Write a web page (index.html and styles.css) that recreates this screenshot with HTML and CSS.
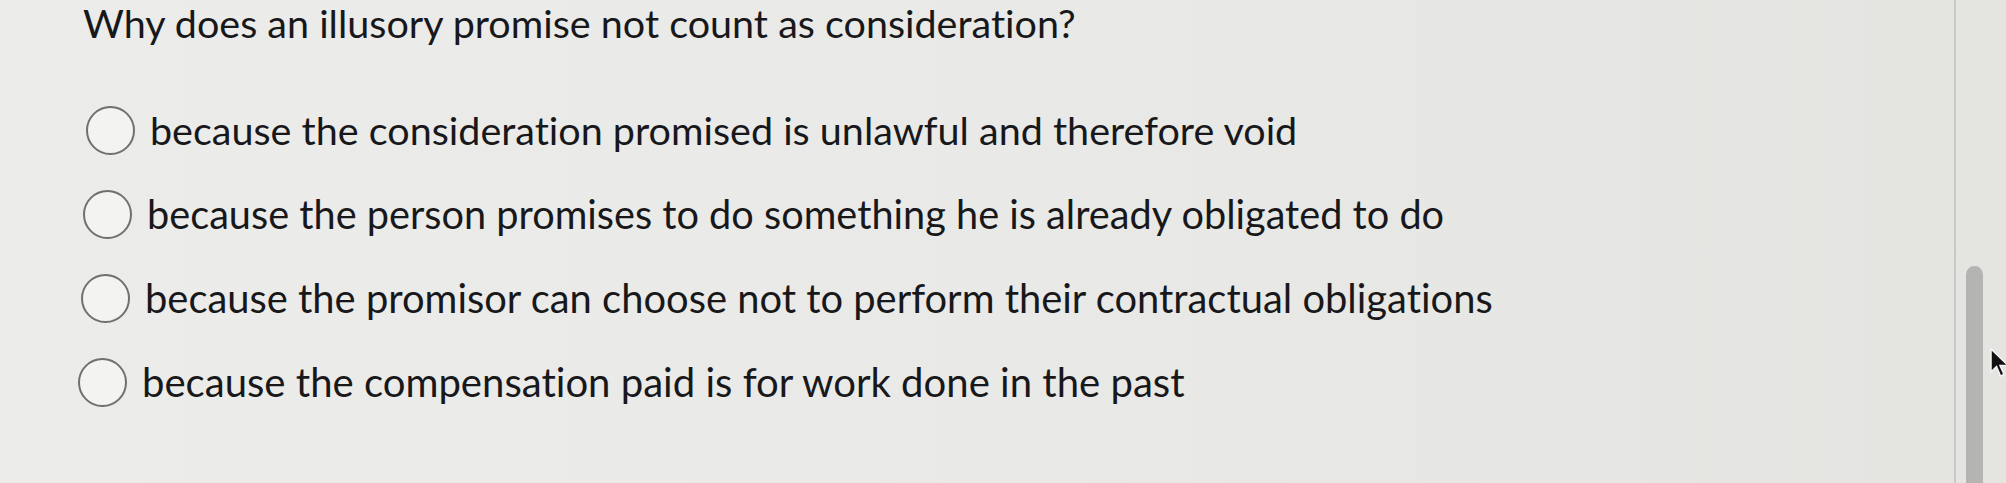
FILE: index.html
```html
<!DOCTYPE html>
<html lang="en">
<head>
<meta charset="utf-8">
<title>Quiz question</title>
<link rel="stylesheet" href="styles.css">
</head>
<body>
<div class="page">
  <main class="quiz">
    <h1 class="question">Why does an illusory promise not count as consideration?</h1>
    <ul class="answers">
      <li class="answer a1"><span class="radio"></span><span class="label">because the consideration promised is unlawful and therefore void</span></li>
      <li class="answer a2"><span class="radio"></span><span class="label">because the person promises to do something he is already obligated to do</span></li>
      <li class="answer a3"><span class="radio"></span><span class="label">because the promisor can choose not to perform their contractual obligations</span></li>
      <li class="answer a4"><span class="radio"></span><span class="label">because the compensation paid is for work done in the past</span></li>
    </ul>
  </main>
  <div class="scrollbar">
    <div class="track-line"></div>
    <div class="thumb"></div>
  </div>
  <svg class="cursor" width="22" height="32" viewBox="0 0 22 32"><path d="M1 1 L1 24 L6.5 18.5 L10.5 28 L14 26.5 L10 17.5 L18 17.5 Z" fill="#111" stroke="#f4f4f4" stroke-width="1.5"/></svg>
</div>
</body>
</html>
```
FILE: styles.css
```css
html, body {
  margin: 0;
  padding: 0;
}
body {
  width: 2006px;
  height: 483px;
  overflow: hidden;
  background: linear-gradient(90deg, #ececea 0%, #e9e9e7 50%, #e4e4e1 100%);
  font-family: Lato, "Open Sans", "Liberation Sans", sans-serif;
  color: #18181b;
  font-variant-ligatures: none;
  font-feature-settings: "liga" 0, "clig" 0;
}
.page {
  position: relative;
  width: 2006px;
  height: 483px;
}
.quiz {
  padding-left: 83px;
}
.question {
  margin: 0;
  font-size: 39.5px;
  line-height: 46px;
  font-weight: 400;
}
.answers {
  list-style: none;
  margin: 60px 0 0 0;
  padding: 0;
  display: flex;
  flex-direction: column;
  gap: 36px;
}
.answer {
  display: flex;
  align-items: center;
  gap: 15px;
  height: 48px;
  font-size: 39.5px;
  line-height: 48px;
}
.a1 { padding-left: 3px; }
.a2 { padding-left: 0; font-size: 39.7px; }
.a3 { margin-left: -2px; font-size: 39.9px; }
.a4 { margin-left: -5px; font-size: 40.1px; }
.radio {
  box-sizing: border-box;
  width: 49px;
  height: 49px;
  border-radius: 50%;
  border: 2px solid #707070;
  background: #f3f3f1;
  flex: none;
}
.scrollbar {
  position: absolute;
  top: 0;
  left: 1950px;
  width: 56px;
  height: 483px;
}
.track-line {
  position: absolute;
  left: 4px;
  top: 0;
  width: 2px;
  height: 483px;
  background: #c9c9c6;
}
.thumb {
  position: absolute;
  left: 16px;
  top: 266px;
  width: 17px;
  height: 240px;
  border-radius: 9px;
  background: #b4b4b2;
}
.cursor {
  position: absolute;
  left: 1990px;
  top: 348px;
}
```
